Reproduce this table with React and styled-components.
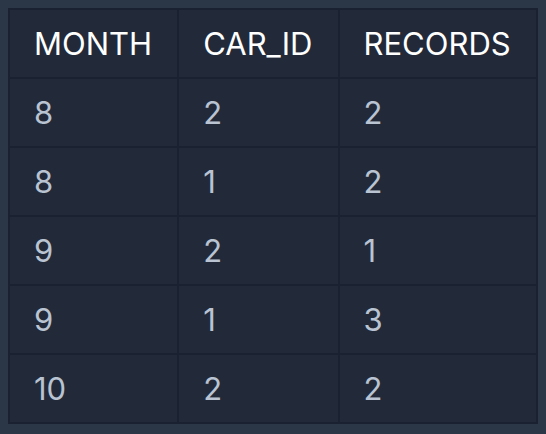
import React from "react";
import styled, { createGlobalStyle } from "styled-components";

const GlobalStyle = createGlobalStyle`
  body {
    margin: 8px;
    background: #2b3646;
    font-family: Inter, "Noto Sans", sans-serif;
  }
`;

const Table = styled.table`
  width: 100%;
  border-collapse: collapse;
  background: #222a3a;
  border: 2px solid #1a2130;
`;

const HeadCell = styled.th`
  text-align: left;
  font-weight: 400;
  font-size: 31px;
  color: #ffffff;
  height: 67px;
  padding: 0 24px;
  border: 2px solid #1a2130;
`;

const Cell = styled.td`
  font-size: 31px;
  color: #b9c3d1;
  height: 67px;
  padding: 0 24px;
  border: 2px solid #1a2130;
`;

const columns = ["MONTH", "CAR_ID", "RECORDS"];
const rows = [
  [8, 2, 2],
  [8, 1, 2],
  [9, 2, 1],
  [9, 1, 3],
  [10, 2, 2],
];

export default function App() {
  return (
    <>
      <GlobalStyle />
      <Table>
        <thead>
          <tr>
            {columns.map((c) => (
              <HeadCell key={c}>{c}</HeadCell>
            ))}
          </tr>
        </thead>
        <tbody>
          {rows.map((r, i) => (
            <tr key={i}>
              {r.map((v, j) => (
                <Cell key={j}>{v}</Cell>
              ))}
            </tr>
          ))}
        </tbody>
      </Table>
    </>
  );
}
